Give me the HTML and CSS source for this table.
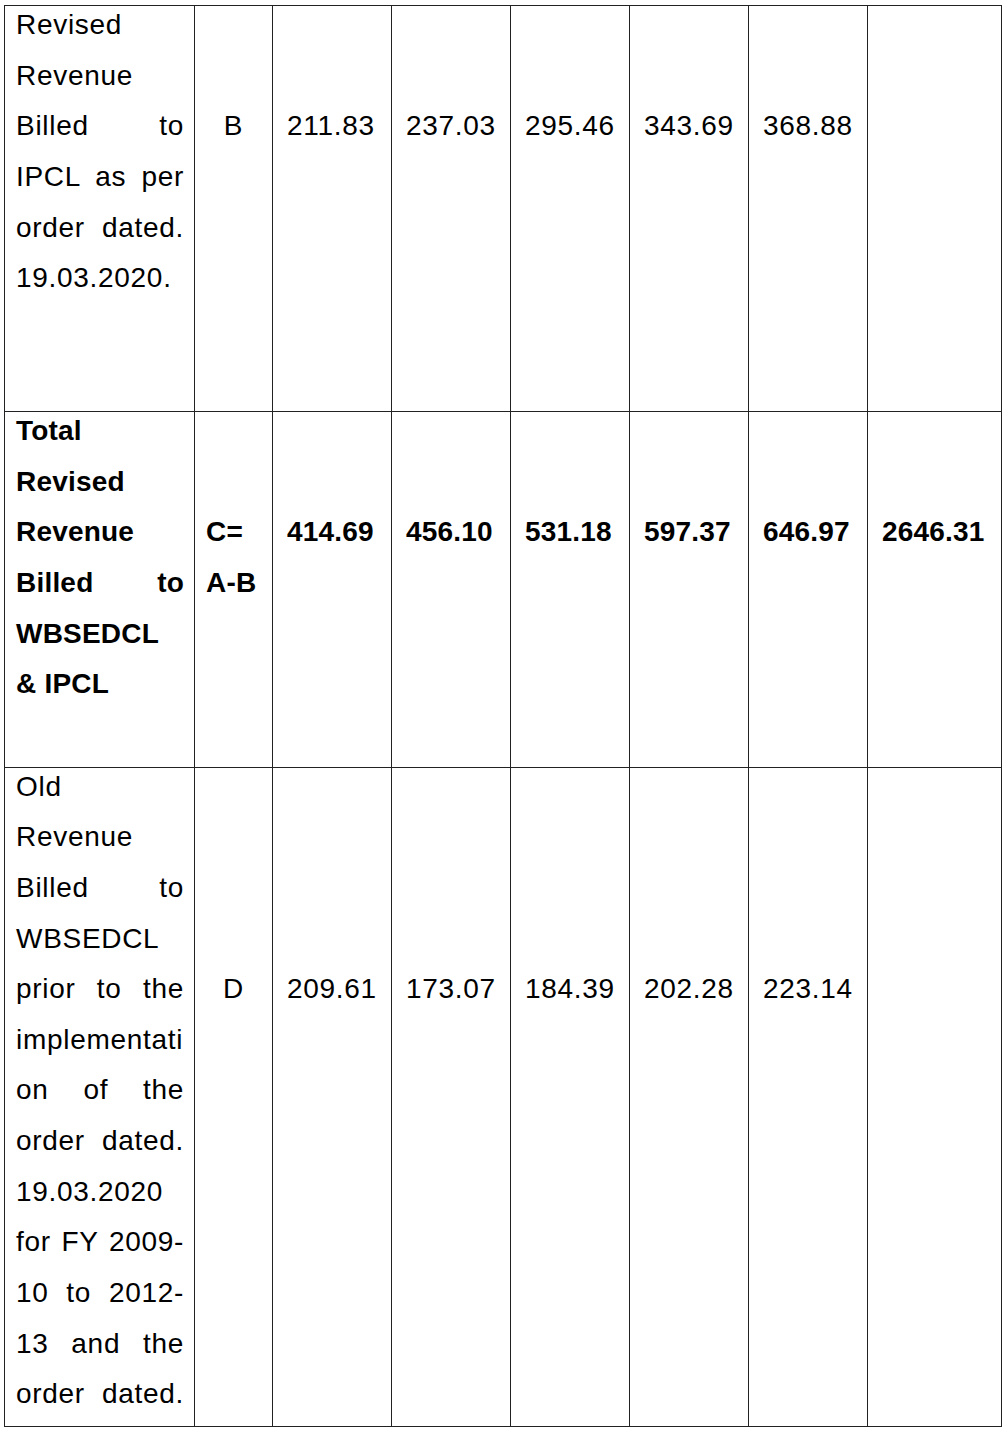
FILE: index.html
```html
<!DOCTYPE html>
<html lang="en">
<head>
<meta charset="utf-8">
<title>Revised Revenue Table</title>
<link rel="stylesheet" href="styles.css">
</head>
<body>
<table class="grid">
  <colgroup>
    <col class="c-label">
    <col class="c-code">
    <col class="c-num">
    <col class="c-num">
    <col class="c-num">
    <col class="c-num">
    <col class="c-num">
    <col class="c-total">
  </colgroup>
  <tr>
    <td class="label">
      <div class="ln">Revised</div>
      <div class="ln">Revenue</div>
      <div class="ln j">Billed to</div>
      <div class="ln j">IPCL as per</div>
      <div class="ln j">order dated.</div>
      <div class="ln">19.03.2020.</div>
      <div class="ln"></div>
      <div class="ln"></div>
    </td>
    <td class="code center at3"><div class="ln">B</div></td>
    <td class="num at3"><div class="ln">211.83</div></td>
    <td class="num at3"><div class="ln">237.03</div></td>
    <td class="num at3"><div class="ln">295.46</div></td>
    <td class="num at3"><div class="ln">343.69</div></td>
    <td class="num at3"><div class="ln">368.88</div></td>
    <td class="num at3"></td>
  </tr>
  <tr class="total">
    <td class="label">
      <div class="ln">Total</div>
      <div class="ln">Revised</div>
      <div class="ln">Revenue</div>
      <div class="ln j">Billed to</div>
      <div class="ln">WBSEDCL</div>
      <div class="ln">&amp; IPCL</div>
      <div class="ln"></div>
    </td>
    <td class="code at3"><div class="ln">C=</div><div class="ln">A-B</div></td>
    <td class="num at3"><div class="ln">414.69</div></td>
    <td class="num at3"><div class="ln">456.10</div></td>
    <td class="num at3"><div class="ln">531.18</div></td>
    <td class="num at3"><div class="ln">597.37</div></td>
    <td class="num at3"><div class="ln">646.97</div></td>
    <td class="num at3"><div class="ln">2646.31</div></td>
  </tr>
  <tr>
    <td class="label">
      <div class="ln">Old</div>
      <div class="ln">Revenue</div>
      <div class="ln j">Billed to</div>
      <div class="ln">WBSEDCL</div>
      <div class="ln j">prior to the</div>
      <div class="ln">implementati</div>
      <div class="ln j">on of the</div>
      <div class="ln j">order dated.</div>
      <div class="ln">19.03.2020</div>
      <div class="ln j">for FY 2009-</div>
      <div class="ln j">10 to 2012-</div>
      <div class="ln j">13 and the</div>
      <div class="ln j">order dated.</div>
    </td>
    <td class="code center at5"><div class="ln">D</div></td>
    <td class="num at5"><div class="ln">209.61</div></td>
    <td class="num at5"><div class="ln">173.07</div></td>
    <td class="num at5"><div class="ln">184.39</div></td>
    <td class="num at5"><div class="ln">202.28</div></td>
    <td class="num at5"><div class="ln">223.14</div></td>
    <td class="num at5"></td>
  </tr>
</table>
</body>
</html>
```
FILE: styles.css
```css
:root {
  --line: 50.65px;
}

html, body {
  margin: 0;
  padding: 0;
  background: #ffffff;
}

body {
  font-family: "Liberation Sans", Arial, sans-serif;
  font-size: 28px;
  color: #000000;
}

.grid {
  border-collapse: collapse;
  table-layout: fixed;
  width: 996px;
  margin: 5px 0 0 4px;
}

.c-label { width: 190px; }
.c-code { width: 78px; }
.c-num { width: 119px; }
.c-total { width: 134px; }

.grid td {
  border: 1px solid #222222;
  vertical-align: top;
  padding: 0 14px;
  letter-spacing: 0.7px;
}

.grid td.label {
  padding: 0 10px 0 11px;
}

.grid td.code {
  padding: 0 4px 0 11px;
}

.grid td.center {
  text-align: center;
  padding: 0 2px;
}

.at3 { padding-top: calc(var(--line) * 2) !important; }
.at5 { padding-top: calc(var(--line) * 4) !important; }

.ln {
  height: var(--line);
  line-height: 38.6px;
  white-space: nowrap;
}

.ln.j {
  text-align: justify;
  text-align-last: justify;
  white-space: normal;
}

.total td {
  font-weight: bold;
  letter-spacing: 0.2px;
}
```
